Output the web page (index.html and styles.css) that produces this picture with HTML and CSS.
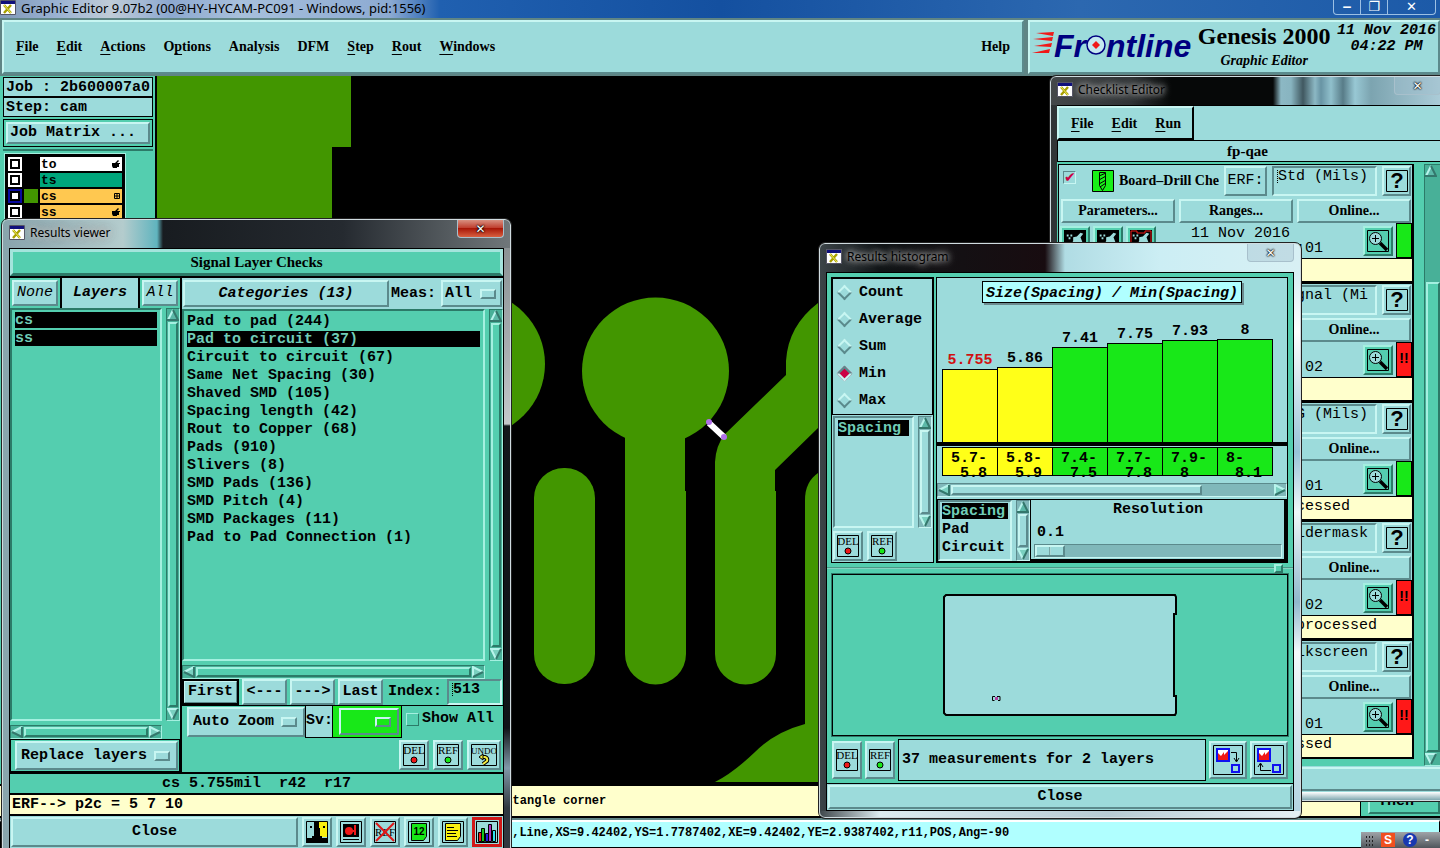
FILE: index.html
```html
<!DOCTYPE html>
<html lang="en">
<head>
  <meta charset="UTF-8">
  <meta name="viewport" content="width=device-width, initial-scale=1.0">
  <title>Graphic Editor 9.07b2</title>
  <link rel="stylesheet" href="styles.css">
</head>
<body>
  <!-- Shared icons -->
  <svg class="defs" width="0" height="0" aria-hidden="true">
    <symbol id="app" viewBox="0 0 16 15"><path fill="#fff" stroke="#556" d="M.5.5h15v14H.5z"/><path fill="#10107c" d="M1 1h14v3H1z"/><path stroke="#a8a000" stroke-width="2.4" d="M4 5l7 8M11 5l-7 8"/><path stroke="#f4ee60" d="M4 5l7 8"/></symbol>
    <symbol id="up" viewBox="0 0 12 12"><path fill="#5cb8a8" d="M6 0l6 12H0z"/><path fill="none" stroke="#b8f4ec" stroke-width="2" d="M6 1L1 11"/><path fill="none" stroke="#34776c" stroke-width="2" d="M0 11h11L6 1"/></symbol>
    <symbol id="down" viewBox="0 0 12 12"><path fill="#7ad0c0" d="M0 0h12L6 12z"/><path fill="none" stroke="#b8f4ec" stroke-width="2" d="M11 1H1l5 10"/><path stroke="#34776c" stroke-width="2" d="M11 1L6 11"/></symbol>
    <symbol id="left" viewBox="0 0 12 12"><path fill="#7ad0c0" d="M0 6L12 0v12z"/><path stroke="#b8f4ec" stroke-width="2" d="M1 6l10-5"/><path fill="none" stroke="#34776c" stroke-width="2" d="M1 6l10 5V1"/></symbol>
    <symbol id="right" viewBox="0 0 12 12"><path fill="#7ad0c0" d="M12 6L0 0v12z"/><path fill="none" stroke="#b8f4ec" stroke-width="2" d="M1 11V1l10 5"/><path stroke="#34776c" stroke-width="2" d="M11 6L1 11"/></symbol>
    <symbol id="del" viewBox="0 0 26 24"><path fill="none" stroke="#000" d="M2.500 1.500h21v21h-21z"/><text x="13" y="11" text-anchor="middle" class="tiny">DEL</text><circle cx="13" cy="17" r="3" fill="#f01818" stroke="#000"/></symbol>
    <symbol id="ref" viewBox="0 0 26 24"><path fill="none" stroke="#000" d="M2.500 1.500h21v21h-21z"/><text x="13" y="11" text-anchor="middle" class="tiny">REF</text><circle cx="13" cy="17" r="3" fill="#18e818" stroke="#000"/></symbol>
    <symbol id="zoomin" viewBox="0 0 24 24"><path fill="#54ceaf" stroke="#000" d="M1.500 1.500h21v21h-21z"/><circle cx="9.500" cy="9.500" r="6" fill="#9cdbdb" stroke="#000"/><path stroke="#000" d="M6 9.500h7M9.500 6v7"/><path stroke="#000" stroke-width="3.500" d="M14 14l7 7"/></symbol>
    <symbol id="help" viewBox="0 0 24 24"><path fill="none" stroke="#000" d="M1.500 1.500h21v21h-21z"/><text x="12" y="19" text-anchor="middle" class="qmark">?</text></symbol>
    <symbol id="hand" viewBox="0 0 8 8"><path d="M0 3h3l3-3 1 1-2 2h3v1H7v3H5v1H1L0 6z"/></symbol>
    <symbol id="run" viewBox="0 0 24 24"><path d="M0 0h24v24H0z"/><path fill="#9cdbdb" d="M3 5h2v2H3zM7 5h2v2H7zM5 8h2v2H5zM10 8l4-1 4-4 3 1-3 4 2 5-6 3-7 1 3-5zM4 18h3l4-2 2 4h-9z"/></symbol>
  </svg>

  <div class="main">
    <header class="main-title">
      <svg width="16" height="15"><use href="#app"/></svg>
      <span>Graphic Editor 9.07b2 (00@HY-HYCAM-PC091 - Windows, pid:1556)</span>
      <div class="win-buttons">
        <button aria-label="Minimize">&#8210;</button><button aria-label="Restore">&#10064;</button><button aria-label="Close">&#10005;</button>
      </div>
    </header>

    <div class="topbar">
      <nav class="menubar">
        <a href="#"><u>F</u>ile</a>
        <a href="#"><u>E</u>dit</a>
        <a href="#"><u>A</u>ctions</a>
        <a href="#">O<u>p</u>tions</a>
        <a href="#">Analysis</a>
        <a href="#">DFM</a>
        <a href="#"><u>S</u>tep</a>
        <a href="#"><u>R</u>out</a>
        <a href="#"><u>W</u>indows</a>
        <a href="#" class="help-link">Help</a>
      </nav>
      <div class="brand">
        <div class="logo">
          <svg width="22" height="26" viewBox="0 0 22 26"><path fill="#f01818" d="M4 3l18-1-1 4zM1 9l20-2-1 4zM2 16l18-3-1 4zM0 23l18-4-1 4z"/></svg>
          <span>Fr</span><svg width="20" height="26" viewBox="0 0 20 26"><circle cx="10" cy="15" r="9" fill="#c4e8f0" stroke="#000080" stroke-width="1.500"/><path fill="#f01818" d="M10 11l4 4-4 4-4-4z"/></svg><span>ntline</span>
        </div>
        <div class="product"><strong>Genesis 2000</strong><em>Graphic Editor</em></div>
        <div class="clock">11 Nov 2016<br>04:22 PM</div>
      </div>
    </div>

    <div class="work">
      <aside class="sidebar">
        <div class="job">Job : 2b600007a0</div>
        <div class="job">Step: cam</div>
        <div class="matrix"><button class="btn">Job Matrix ...</button></div>
        <div class="layer-area">
          <div class="layer-table">
            <div class="layer"><input type="checkbox" aria-label="to"><i></i><span class="white">to<svg width="8" height="8"><use href="#hand"/></svg></span></div>
            <div class="layer"><input type="checkbox" aria-label="ts"><i></i><span class="green">ts</span></div>
            <div class="layer"><input type="checkbox" aria-label="cs" checked><i class="on"></i><span class="orange">cs<svg width="6" height="6" viewBox="0 0 6 6"><path fill="none" stroke="#000" d="M.5.5h5v5h-5zM3 0v6M0 3h6"/></svg></span></div>
            <div class="layer"><input type="checkbox" aria-label="ss"><i></i><span class="orange">ss<svg width="8" height="8"><use href="#hand"/></svg></span></div>
          </div>
        </div>
      </aside>
      <div class="canvas">
        <svg width="100%" height="100%">
          <g transform="translate(-157 -76)" fill="#429600">
            <path d="M157 76h194v71h-19v80H157z"/>
            <circle cx="472" cy="364" r="73"/>
            <circle cx="655.500" cy="371" r="73.500"/>
            <path d="M625 430h60v61h1v163a30.500 30.500 0 0 1-61 0V491z"/>
            <rect x="534" y="468" width="61" height="216" rx="30"/>
            <path d="M715 462q1-17 10-28l61-59v-14q2-35 32-58v125l-43 42v21h1v163a30.500 30.500 0 0 1-61 0z"/>
            <path d="M805 520v-20q0-18 13-27v220q-13-8-13-30z"/>
            <path d="M715 782q18-9 40-30 20-20 50-28 10-2 18-2v60z"/>
            <path d="M805 520h13v205h-13z"/>
            <path stroke="#fff" stroke-width="6" d="M709 423l15 14"/>
            <g fill="#b070e8"><circle cx="709" cy="422" r="3"/><circle cx="724" cy="437" r="3"/></g>
          </g>
        </svg>
      </div>
    </div>
    <div class="prompt"><span>Rectangle corner</span><div class="then"><button class="btn teal">Then</button></div></div>
    <div class="coords">2,Line,XS=9.42402,YS=1.7787402,XE=9.42402,YE=2.9387402,r11,POS,Ang=-90</div>
  </div>

  <!-- Checklist Editor -->
  <section class="window checklist">
    <header class="title"><svg width="16" height="15"><use href="#app"/></svg><span>Checklist Editor</span><button class="x" aria-label="Close">&#10005;</button></header>
    <div class="content">
      <nav class="check-menu"><a href="#"><u>F</u>ile</a><a href="#"><u>E</u>dit</a><a href="#"><u>R</u>un</a></nav>
      <div class="check-name">fp-qae</div>
      <div class="check-body">
        <div class="cards">
          <div class="card">
            <div class="card-head"><input type="checkbox" checked aria-label="Board-Drill Checks">
              <svg class="drill" width="22" height="22" viewBox="0 0 22 22"><path fill="#18f018" stroke="#000" d="M.5.5h21v21H.5z"/><path fill="none" stroke="#000" d="M7.500 2.500h6v13l-3 5-3-5zM7 6l7-3M7 10l7-4M7 14l7-4M8 17l6-4"/></svg>
              <b>Board&ndash;Drill Checks</b><button class="btn">ERF:</button><input type="text" aria-label="ERF" value="Std (Mils)"><button class="btn icon"><svg width="24" height="24"><use href="#help"/></svg></button></div>
            <div class="card-buttons"><button class="btn">Parameters...</button><button class="btn">Ranges...</button><button class="btn">Online...</button></div>
            <div class="card-run"><button class="btn icon teal"><svg width="22" height="22"><use href="#run"/></svg></button><button class="btn icon teal"><svg width="22" height="22"><use href="#run"/></svg></button><button class="btn icon teal"><svg width="22" height="22"><use href="#run"/><path fill="none" stroke="#f01818" d="M1 1h6v2h8V1h6v20H1z"/></svg></button>
              <p>11 Nov 2016<br><span>00:00:01</span></p><button class="btn icon teal"><svg width="24" height="24"><use href="#zoomin"/></svg></button><div class="flag ok"></div></div>
            <div class="message"></div>
          </div>
          <div class="card">
            <div class="card-head"><input type="text" aria-label="ERF" value="Signal (Mi"><button class="btn icon"><svg width="24" height="24"><use href="#help"/></svg></button></div>
            <div class="card-buttons"><button class="btn">Online...</button></div>
            <div class="card-run"><p><br><span>00:00:02</span></p><button class="btn icon teal"><svg width="24" height="24"><use href="#zoomin"/></svg></button><div class="flag bad">!!</div></div>
            <div class="message"></div>
          </div>
          <div class="card">
            <div class="card-head"><input type="text" aria-label="ERF" value="P&amp;G (Mils)"><button class="btn icon"><svg width="24" height="24"><use href="#help"/></svg></button></div>
            <div class="card-buttons"><button class="btn">Online...</button></div>
            <div class="card-run"><p><br><span>00:00:01</span></p><button class="btn icon teal"><svg width="24" height="24"><use href="#zoomin"/></svg></button><div class="flag ok"></div></div>
            <div class="message">Layers cs,ss have been processed</div>
          </div>
          <div class="card">
            <div class="card-head"><input type="text" aria-label="ERF" value="Soldermask"><button class="btn icon"><svg width="24" height="24"><use href="#help"/></svg></button></div>
            <div class="card-buttons"><button class="btn">Online...</button></div>
            <div class="card-run"><p><br><span>00:00:02</span></p><button class="btn icon teal"><svg width="24" height="24"><use href="#zoomin"/></svg></button><div class="flag bad">!!</div></div>
            <div class="message">Layers to,ts,bs have been processed</div>
          </div>
          <div class="card">
            <div class="card-head"><input type="text" aria-label="ERF" value="Silkscreen"><button class="btn icon"><svg width="24" height="24"><use href="#help"/></svg></button></div>
            <div class="card-buttons"><button class="btn">Online...</button></div>
            <div class="card-run"><p><br><span>00:00:01</span></p><button class="btn icon teal"><svg width="24" height="24"><use href="#zoomin"/></svg></button><div class="flag bad">!!</div></div>
            <div class="message">Layers cs,ss are all processed</div>
          </div>
        </div>
        <div class="scroll v teal"><svg width="12" height="12"><use href="#up"/></svg><div class="gap"></div><div class="thumb"></div><svg width="12" height="12"><use href="#down"/></svg></div>
      </div>
      <div class="check-foot"><button class="btn" aria-label="Close"></button></div>
    </div>
  </section>

  <!-- Results viewer -->
  <section class="window viewer">
    <header class="title"><svg width="16" height="15"><use href="#app"/></svg><span>Results viewer</span><button class="x red" aria-label="Close">&#10005;</button></header>
    <div class="content">
      <h2 class="viewer-head">Signal Layer Checks</h2>
      <div class="columns">
        <div class="layers-col">
          <div class="layers-head"><div><button class="btn">None</button></div><h3>Layers</h3><div><button class="btn">All</button></div></div>
          <div class="list-wrap">
            <ul class="list"><li class="sel">cs</li><li class="sel">ss</li></ul>
            <div class="scroll v teal"><svg width="12" height="12"><use href="#up"/></svg><div class="thumb"></div><svg width="12" height="12"><use href="#down"/></svg></div>
            <div class="scroll h teal"><svg width="12" height="12"><use href="#left"/></svg><div class="thumb"></div><svg width="12" height="12"><use href="#right"/></svg></div>
          </div>
          <div class="replace"><div class="option"><select aria-label="Replace mode"><option>Replace layers</option></select></div></div>
        </div>
        <div class="cat-col">
          <div class="cat-head"><button class="btn">Categories (13)</button><label for="meas">Meas:</label><div class="option"><select id="meas"><option>All</option></select></div></div>
          <div class="list-wrap">
            <ul class="list">
              <li>Pad to pad (244)</li>
              <li class="sel">Pad to circuit (37)</li>
              <li>Circuit to circuit (67)</li>
              <li>Same Net Spacing (30)</li>
              <li>Shaved SMD (105)</li>
              <li>Spacing length (42)</li>
              <li>Rout to Copper (68)</li>
              <li>Pads (910)</li>
              <li>Slivers (8)</li>
              <li>SMD Pads (136)</li>
              <li>SMD Pitch (4)</li>
              <li>SMD Packages (11)</li>
              <li>Pad to Pad Connection (1)</li>
            </ul>
            <div class="scroll v teal"><svg width="12" height="12"><use href="#up"/></svg><div class="thumb"></div><svg width="12" height="12"><use href="#down"/></svg></div>
            <div class="scroll h teal"><svg width="12" height="12"><use href="#left"/></svg><div class="thumb"></div><svg width="12" height="12"><use href="#right"/></svg></div>
          </div>
          <div class="nav-row"><button class="btn default">First</button><button class="btn">&lt;---</button><button class="btn">---&gt;</button><button class="btn">Last</button><label for="index">Index:</label><input type="text" id="index" value="513"></div>
          <div class="zoom-row">
            <div class="option"><select aria-label="Zoom mode"><option>Auto Zoom</option></select></div>
            <label class="sv" for="sv">Sv:</label>
            <div class="sv-box"><div class="option"><select id="sv"><option></option></select></div></div>
            <label class="show-all"><input type="checkbox">Show All</label>
          </div>
          <div class="icon-row">
            <button class="btn icon"><svg width="26" height="24"><use href="#del"/></svg></button>
            <button class="btn icon"><svg width="26" height="24"><use href="#ref"/></svg></button>
            <button class="btn icon wide"><svg width="30" height="24" viewBox="0 0 30 24"><path fill="none" stroke="#000" d="M2.500 1.500h25v21h-25z"/><text x="15" y="11" text-anchor="middle" class="tiny narrow">UNDO</text><path fill="none" stroke="#000" stroke-width="4" d="M12 14h4q3 1 2 4l-4 3"/><path fill="none" stroke="#f8f040" stroke-width="2" d="M12 14h4q3 1 2 4l-4 3"/><path fill="#f8f040" stroke="#000" d="M10 14l4-3v6z"/></svg></button>
          </div>
        </div>
      </div>
      <div class="measure">cs 5.755mil&nbsp; r42&nbsp; r17</div>
      <div class="erf">ERF--&gt; p2c = 5 7 10</div>
      <div class="close-row">
        <button class="btn close">Close</button>
        <button class="btn icon" aria-label="Faces"><svg width="22" height="22" viewBox="0 0 22 22"><path fill="#9cdbdb" stroke="#000" d="M.5.5h21v21H.5z"/><path fill="#f8f010" d="M12 1h9v15h-9z"/><path d="M8 1h5v6h1v8h2v2h6v5H0v-5h6v-2h2zM4 5h2v2H4zM17 5h2v2h-2z"/></svg></button>
        <button class="btn icon" aria-label="Display"><svg width="22" height="22" viewBox="0 0 22 22"><path fill="#9cdbdb" stroke="#000" d="M.5.5h21v21H.5z"/><path d="M3 3h16v13H3z"/><circle cx="9" cy="10" r="4" fill="#f01818"/><path fill="#f01818" d="M14 4h2v10h-2zM10 9h5v2h-5z"/><path fill="none" stroke="#000" d="M3 18.500h16"/></svg></button>
        <button class="btn icon" aria-label="Clear references"><svg width="24" height="22" viewBox="0 0 24 22"><path fill="none" stroke="#000" d="M1.500.5h21v21h-21z"/><text x="12" y="15" text-anchor="middle" class="tiny">REF</text><path stroke="#e01818" stroke-width="2" d="M3 2l18 18M21 2L3 20"/></svg></button>
        <button class="btn icon" aria-label="Numbers"><svg width="22" height="22" viewBox="0 0 22 22"><path fill="none" stroke="#000" d="M.5.5h21v21H.5z"/><path fill="#18e818" stroke="#000" d="M3.500 2.500h15v13l-3 4h-12z"/><text x="11" y="14" text-anchor="middle" class="num">12</text></svg></button>
        <button class="btn icon" aria-label="Notes"><svg width="22" height="22" viewBox="0 0 22 22"><path fill="none" stroke="#000" d="M.5.5h21v21H.5z"/><path fill="#f8f010" stroke="#000" d="M3.500 2.500h15v13l-3 4h-12z"/><path stroke="#000" d="M5 6.500h7M5 9.500h11M5 12.500h9M5 15.500h10"/></svg></button>
        <button class="btn icon hist-btn" aria-label="Histogram"><svg width="22" height="22" viewBox="0 0 22 22"><path fill="#9cdbdb" stroke="#000" d="M.5.5h21v21H.5z"/><g stroke="#000"><path fill="#f01818" d="M2.500 11.500h3v9h-3z"/><path fill="#18c818" d="M5.500 7.500h3v13h-3z"/><path fill="#2020e0" d="M9.500 12.500h3v8h-3z"/><path fill="#b030c0" d="M12.500 3.500h3v17h-3z"/><path fill="#30e0f0" d="M16.500 9.500h3v11h-3z"/></g></svg></button>
      </div>
    </div>
  </section>

  <!-- Results histogram -->
  <section class="window histogram">
    <header class="title"><svg width="16" height="15"><use href="#app"/></svg><span>Results histogram</span><button class="x" aria-label="Close">&#10005;</button></header>
    <div class="content">
      <div class="hist-top">
        <div class="hist-side">
          <div class="radios">
            <label><input type="radio" name="stat">Count</label>
            <label><input type="radio" name="stat">Average</label>
            <label><input type="radio" name="stat">Sum</label>
            <label><input type="radio" name="stat" checked>Min</label>
            <label><input type="radio" name="stat">Max</label>
          </div>
          <div class="list-wrap pale">
            <ul class="list"><li class="sel">Spacing</li></ul>
            <div class="scroll v"><svg width="12" height="12"><use href="#up"/></svg><div class="thumb"></div><svg width="12" height="12"><use href="#down"/></svg></div>
          </div>
          <div class="side-buttons">
            <button class="btn icon"><svg width="26" height="24"><use href="#del"/></svg></button>
            <button class="btn icon"><svg width="26" height="24"><use href="#ref"/></svg></button>
          </div>
        </div>
        <div class="hist-main">
          <div class="chart">
            <h3>Size(Spacing) / Min(Spacing)</h3>
            <div class="bars">
              <div class="bar low worst"><span>5.755</span><i style="height: 73px"></i></div>
              <div class="bar low"><span>5.86</span><i style="height: 75px"></i></div>
              <div class="bar"><span>7.41</span><i style="height: 95px"></i></div>
              <div class="bar"><span>7.75</span><i style="height: 99px"></i></div>
              <div class="bar"><span>7.93</span><i style="height: 102px"></i></div>
              <div class="bar"><span>8</span><i style="height: 103px"></i></div>
            </div>
            <div class="ranges">
              <pre class="low">5.7-
 5.8</pre><pre class="low">5.8-
 5.9</pre><pre>7.4-
 7.5</pre><pre>7.7-
 7.8</pre><pre>7.9-
 8</pre><pre>8-
 8.1</pre>
            </div>
          </div>
          <div class="scroll h chart-scroll"><svg width="12" height="12"><use href="#left"/></svg><div class="thumb"></div><div class="gap"></div><svg width="12" height="12"><use href="#right"/></svg></div>
          <div class="hist-bottom">
            <div class="list-wrap pale">
              <ul class="list"><li class="sel">Spacing</li><li>Pad</li><li>Circuit</li></ul>
              <div class="scroll v"><svg width="12" height="12"><use href="#up"/></svg><div class="thumb"></div><svg width="12" height="12"><use href="#down"/></svg></div>
            </div>
            <div class="resolution"><label for="res">Resolution</label><output>0.1</output><input type="range" id="res" min="0" max="10" step="0.1" value="0"></div>
          </div>
        </div>
      </div>
      <div class="sash"><i></i></div>
      <div class="map">
        <svg width="234" height="122" viewBox="0 0 234 122"><path fill="#9cdbdb" stroke="#000" stroke-width="2" d="M3 1h229l1 2v17h-2v82h2v17l-1 2H3l-2-2V3z"/><path fill="none" stroke="#000" d="M52 102.500h-2.500v4h2M54 102.500h3v4h-2"/><path fill="#b040a0" d="M52 103h3v3h-3z"/></svg>
      </div>
      <div class="hist-foot">
        <button class="btn icon"><svg width="26" height="24"><use href="#del"/></svg></button>
        <button class="btn icon"><svg width="26" height="24"><use href="#ref"/></svg></button>
        <div class="summary">37 measurements for 2 layers</div>
        <button class="btn icon big" aria-label="Next"><svg width="32" height="30" viewBox="0 0 32 30"><path fill="none" stroke="#000" d="M1.500.5h29v29h-29z"/><path fill="#fff" stroke="#1010f0" stroke-width="2" d="M5 4h12v12H5z"/><path fill="#f01818" d="M6 15V8l3 3 3-4v3l4-4v9z"/><path fill="none" stroke="#1010f0" stroke-width="2" d="M20 20h7v7h-7z"/><path fill="none" stroke="#000" d="M19 7.500h5.500V16M22 13l2.500 4 2.500-4"/></svg></button>
        <button class="btn icon big" aria-label="Previous"><svg width="32" height="30" viewBox="0 0 32 30"><path fill="none" stroke="#000" d="M1.500.5h29v29h-29z"/><path fill="#fff" stroke="#1010f0" stroke-width="2" d="M5 4h12v12H5z"/><path fill="#f01818" d="M6 15V8l3 3 3-4v3l4-4v9z"/><path fill="none" stroke="#1010f0" stroke-width="2" d="M20 20h7v7h-7z"/><path fill="none" stroke="#000" d="M18 25.500H7.500V19M5 22l2.500-4 2.500 4"/></svg></button>
      </div>
      <div class="hist-close"><button class="btn">Close</button></div>
    </div>
  </section>

  <div class="tray"><span class="grip"></span><b class="sogou">S</b><b class="ask">?</b><b>-</b></div>
</body>
</html>
```
FILE: styles.css
```css
* { box-sizing: border-box; }
:root { --pale: #9cdbdb; --teal: #54ceaf; --hi: #c8f6f2; --sh: #5b8a8c; --thi: #a4f0e0; --tsh: #2c7a68; --cream: #ffffcc; --mono: "Liberation Mono", monospace; --serif: "Liberation Serif", serif; }
html, body { height: 100%; }
body { margin: 0; overflow: hidden; position: relative; background: #000; color: #000; font: bold 15px/18px var(--mono); }
h2, h3, p, ul, pre { margin: 0; padding: 0; font: inherit; }
ul { list-style: none; }
svg { display: block; flex: none; }
a { color: inherit; text-decoration: none; }
u { text-underline-offset: 3px; }
button, input, select { font: inherit; color: inherit; margin: 0; padding: 0; border-radius: 0; }
.defs { display: none; }
.tiny { font: 11px var(--serif); }
.narrow { font-size: 9px; }
.num { font: bold 10px "Liberation Sans", sans-serif; }
.qmark { font: bold 22px "Liberation Sans", sans-serif; }

/* Motif style widgets */
.btn { background: var(--pale); border: 2px solid; border-color: var(--hi) var(--sh) var(--sh) var(--hi); white-space: nowrap; }
.btn.teal { background: var(--teal); border-color: var(--thi) var(--tsh) var(--tsh) var(--thi); }
.btn.icon { display: flex; align-items: center; justify-content: center; flex: none; width: 30px; height: 30px; }
.btn.icon.wide { width: 34px; }
input[type="text"] { background: repeating-linear-gradient(#000 0, #000 1px, transparent 1px, transparent 2px) 3px 2px / 1px 14px no-repeat; border: 2px solid; border-color: var(--sh) var(--hi) var(--hi) var(--sh); min-width: 0; }
.option { display: flex; align-items: center; background: var(--pale); border: 2px solid; border-color: var(--hi) var(--sh) var(--sh) var(--hi); padding: 0 6px 0 4px; }
.option select { appearance: none; flex: 1; min-width: 0; border: 0; background: transparent; }
.option::after { content: ""; width: 12px; height: 6px; border: 2px solid; border-color: var(--hi) var(--sh) var(--sh) var(--hi); }
.scroll { display: flex; background: #80b8ba; border: 1px solid; border-color: var(--sh) var(--hi) var(--hi) var(--sh); }
.scroll.teal { background: #48b098; border-color: var(--tsh) var(--thi) var(--thi) var(--tsh); }
.scroll.v { flex-direction: column; width: 14px; }
.scroll.h { height: 14px; }
.thumb { flex: 1; margin: 1px; background: var(--pale); border: 2px solid; border-color: var(--hi) var(--sh) var(--sh) var(--hi); }
.teal .thumb { background: var(--teal); border-color: var(--thi) var(--tsh) var(--tsh) var(--thi); }
.list-wrap { display: grid; grid-template: 1fr / 1fr 14px; gap: 4px; min-height: 0; }
.list { border: 2px solid; border-color: var(--tsh) var(--thi) var(--thi) var(--tsh); padding: 2px 3px; overflow: hidden; }
.pale .list { border-color: var(--sh) var(--hi) var(--hi) var(--sh); }
.list li { height: 16px; line-height: 18px; margin-bottom: 2px; white-space: nowrap; }
.list .sel { background: #000; color: #70cdb8; }

/* Main window */
.main { height: 100%; display: flex; flex-direction: column; background: #5f8585; }
.main-title { display: flex; gap: 5px; height: 18px; flex: none; overflow: hidden; background: linear-gradient(90deg, #8098b8 0, #9cb4d4 60px, #c0ccd8 110px, #8ca8d0 170px, #a8c0dc 240px, #8caad2 390px, #2060b0 440px, #1450a0 50%, #2c68b0 75%, #1c5aa8); font: 13px/16px "Noto Sans", sans-serif; }
.win-buttons { display: flex; margin-left: auto; margin-right: 4px; height: 15px; border: 1px solid #9cc0e4; border-top: 0; border-radius: 0 0 4px 4px; }
.win-buttons button { width: 27px; border: 0; border-right: 1px solid #9cc0e4; background: transparent; color: #fff; font: bold 13px/10px "DejaVu Sans", sans-serif; }
.win-buttons button:last-child { width: 47px; border: 0; }
.topbar { display: flex; gap: 4px; padding: 2px 0 2px 2px; height: 58px; flex: none; }
.menubar, .brand { background: var(--pale); border: 2px solid; border-color: var(--hi) var(--sh) var(--sh) var(--hi); }
.menubar { flex: 1; display: flex; align-items: center; gap: 18px; padding: 0 12px; font: bold 14px/18px var(--serif); }
.help-link { margin-left: auto; }
.brand { width: 412px; display: flex; padding-left: 2px; }
.logo { display: flex; align-items: flex-start; padding-top: 8px; color: #000080; font: italic bold 32px/32px "Liberation Sans", sans-serif; }
.product { flex: 1; text-align: center; }
.product strong { display: block; font: bold 24px/29px var(--serif); white-space: nowrap; }
.product em { display: block; font: italic bold 14px/20px var(--serif); }
.clock { font: italic bold 15px/16px var(--mono); text-align: center; padding: 1px 2px 0 0; white-space: nowrap; }
.work { flex: 1; display: flex; min-height: 0; }
.sidebar { width: 157px; background: var(--teal); border-right: 2px solid #000; padding: 1px 2px 0 3px; display: flex; flex-direction: column; }
.job { background: var(--pale); border: 1px solid #000; height: 20px; padding-left: 2px; line-height: 20px; white-space: nowrap; }
.matrix { border: 1px solid #000; margin: 2px 0; padding: 2px; display: flex; }
.matrix .btn { flex: 1; height: 22px; text-align: left; padding-left: 2px; line-height: 18px; }
.layer-area { flex: 1; padding: 3px 0 0 2px; border-top: 2px solid var(--tsh); }
.layer-table { width: 120px; border: 1px solid #000; background: #000; padding: 1px; outline: 1px solid var(--thi); }
.layer { display: flex; gap: 2px; height: 16px; padding: 1px; font-size: 13px; line-height: 15px; }
.layer input { appearance: none; width: 14px; height: 14px; background: #fff; border: 2px solid #fff; outline: 2px solid #000; outline-offset: -4px; }
.layer input:checked { border-color: #0a0aa0; }
.layer i { width: 14px; }
.layer .on { background: #429600; }
.layer span { flex: 1; display: flex; align-items: center; justify-content: space-between; padding: 0 2px 0 1px; }
.layer .white { background: #fff; }
.layer .green { background: #00a67c; }
.layer .orange { background: #ffc850; }
.canvas { flex: 1; background: #000; min-width: 0; }
.prompt { height: 34px; flex: none; border: solid #000; border-width: 2px 0; background: var(--cream); display: flex; align-items: center; justify-content: space-between; padding-left: 491px; font-size: 12px; }
.then { align-self: stretch; width: 80px; background: var(--teal); border-left: 1px solid #000; padding: 4px 0 2px 7px; display: flex; }
.then .btn { flex: 1; font-size: 15px; padding-right: 16px; }
.coords { margin-top: 2px; height: 28px; flex: none; background: #b0ffff; border: 1px solid #000; border-top: 2px solid #fff; padding-left: 504px; font-size: 12px; line-height: 23px; white-space: nowrap; }

/* Floating windows */
.window { position: absolute; border: 1px solid #d0dce0; border-radius: 6px; padding: 0 6px; outline: 1px solid #222; display: flex; flex-direction: column; }
.title { display: flex; gap: 5px; align-items: flex-start; flex: none; font: 12px/16px "Noto Sans", sans-serif; }
.title > svg, .title span { margin-top: 5px; }
.title span { text-shadow: 0 0 5px #ccc, 0 0 8px #aaa, 0 0 12px #999; }
.title .x { margin-left: auto; width: 47px; height: 18px; border: 1px solid #a8c0cc; border-top: 0; border-radius: 0 0 4px 4px; background: rgba(160, 190, 205, .4); color: #fff; font: bold 12px/14px "DejaVu Sans", sans-serif; text-shadow: 0 0 1px #000, 0 0 2px #000, 0 0 2px #000; }
.title .x.red { background: linear-gradient(#d89080, #c04030 45%, #a81808 50%, #d86040); }
.content { display: flex; flex-direction: column; }

.viewer { left: 2px; top: 219px; width: 509px; bottom: -6px; background: linear-gradient(#8c9294, #a8adb0 100px, #c4c8ca 176px, #14181c 178px, #101418 480px, #8098a8 520px, #303840 560px) 100% 28px / 7px 100% no-repeat, linear-gradient(90deg, #88a4ac 0, #b4cccd 120px, #60b4be 154px, #181c20 160px, #252a30 340px, #70777a 100%); }
.viewer .title { height: 28px; }
.viewer .content { flex: 1; background: #000; gap: 2px; padding: 1px; }
.viewer-head { height: 27px; background: var(--teal); border: 3px solid #a4e4dc; border-bottom-color: var(--tsh); text-align: center; font: bold 15px/21px var(--serif); }
.columns { display: grid; grid-template-columns: 170px 1fr; gap: 2px; height: 494px; }
.layers-col, .cat-col { background: var(--teal); display: flex; flex-direction: column; min-width: 0; }
.layers-head { display: grid; grid-template-columns: 50px 1fr 40px; gap: 2px; background: #000; height: 30px; padding-bottom: 2px; font-style: italic; text-align: center; }
.layers-head div { background: var(--teal); padding: 2px; display: flex; }
.layers-head .btn { flex: 1; font-weight: normal; font-style: italic; }
.layers-head h3 { background: var(--pale); line-height: 30px; }
.layers-col .list-wrap { flex: 1; grid-template-rows: 1fr 14px; }
.cat-col .list-wrap { height: 370px; grid-template-rows: 1fr 14px; }
.replace { height: 33px; border: 1px solid #000; padding: 1px 1px 1px 4px; display: flex; }
.replace .option { flex: 1; }
.cat-head { display: flex; height: 31px; background: var(--pale); padding: 2px 1px; }
.cat-head .btn { width: 206px; font-style: italic; }
.cat-head label { padding: 5px 5px 0 2px; }
.cat-head .option { flex: 1; padding: 0 4px 0 2px; }
.nav-row { display: flex; gap: 3px; height: 26px; padding-right: 1px; }
.nav-row .btn { width: 45px; padding: 0; }
.nav-row .default { width: 57px; outline: 2px solid #000; outline-offset: -2px; border-width: 3px; }
.nav-row label { padding: 4px 2px 0; }
.nav-row input { flex: 1; padding: 0 0 4px 4px; }
.zoom-row { display: flex; height: 33px; border-top: 1px solid #000; }
.zoom-row > .option { width: 118px; margin: 1px 0 1px 5px; }
.sv { background: var(--pale); border: 1px solid #000; border-top: 0; width: 28px; line-height: 30px; }
.sv-box { width: 69px; background: #18e818; border: 1px solid #000; border-width: 0 1px 1px 0; padding: 2px 2px 2px 6px; display: flex; }
.sv-box .option { flex: 1; background: #18e818; }
.show-all { display: flex; align-items: center; gap: 3px; padding: 0 0 6px 4px; }
.show-all input { appearance: none; width: 13px; height: 13px; border: 1px solid; border-color: var(--thi) var(--tsh) var(--tsh) var(--thi); }
.icon-row { flex: 1; display: flex; gap: 4px; justify-content: flex-end; align-items: center; padding-right: 2px; }
.measure { background: var(--teal); height: 19px; line-height: 20px; text-align: center; }
.erf { background: var(--cream); height: 19px; line-height: 20px; padding-left: 2px; }
.close-row { flex: 1; display: flex; gap: 4px; background: var(--pale); padding: 1px; align-items: flex-start; }
.close-row .close { flex: 1; height: 30px; }
.hist-btn { border: 3px solid #d01818; }

.histogram { left: 819px; top: 243px; width: 482px; background: linear-gradient(90deg, #40484c, #dcecf0 60px, #b8ccd4 60%, #e4f0f4) 0 100% / 100% 6px no-repeat, linear-gradient(#d8eef4, #fff 60px, #98c4d8 180px, #f0f8fa 240px, #90b8cc 330px, #f4fafc 380px, #a8ccdc) 100% 28px / 7px 100% no-repeat, linear-gradient(90deg, #3c4448 0, #101416 60px, #180c10 225px, #b0dce4 245px, #cceef4 340px, #d8f0f4); padding-bottom: 6px; }
.histogram .title { height: 28px; }
.histogram .content { background: var(--teal); border: 1px solid #000; }
.hist-top { display: grid; grid-template-columns: 103px 1fr; gap: 2px; height: 286px; margin: 4px 5px 0 4px; }
.hist-side { background: var(--pale); border: 1px solid #000; display: flex; flex-direction: column; }
.radios { height: 137px; border: 1px solid #000; padding: 0 4px; line-height: 16px; }
.radios label { display: flex; align-items: center; gap: 7px; height: 27px; }
.radios input { appearance: none; width: 11px; height: 11px; margin: 0 2px; transform: rotate(45deg); background: var(--pale); border: 2px solid; border-color: var(--hi) var(--sh) var(--sh) var(--hi); }
.radios input:checked { background: #cc0044; border-color: var(--sh) var(--hi) var(--hi) var(--sh); }
.hist-side .list-wrap { flex: 1; padding: 1px; }
.side-buttons { display: flex; gap: 4px; height: 33px; padding: 2px 1px; }
.hist-main { display: flex; flex-direction: column; min-width: 0; border: 1px solid #000; background: var(--pale); }
.chart { height: 205px; display: flex; flex-direction: column; }
.chart h3 { align-self: center; margin-top: 3px; height: 22px; padding: 0 3px; background: #b0ffff; border: 1px solid #000; box-shadow: 2px 2px 0 #6c8c90; font-style: italic; line-height: 24px; }
.bars { flex: 1; display: flex; align-items: flex-end; padding-left: 5px; border-bottom: 4px solid #000; }
.bar { width: 56px; margin-right: -1px; text-align: center; line-height: 16px; }
.bar i { display: block; background: #18e818; border: 1px solid #000; border-bottom: 0; }
.bar.low i, .ranges .low { background: #ffff18; }
.bar.worst { color: #d01010; }
.ranges { display: flex; padding: 1px 0 7px 5px; }
.ranges pre { width: 56px; height: 29px; margin-right: -1px; background: #18e818; border: 1px solid #000; padding: 3px 0 0 8px; line-height: 15px; }
.chart-scroll .thumb { flex: 7; }
.chart-scroll .gap { flex: 2; }
.hist-bottom { flex: 1; display: grid; grid-template-columns: 92px 1fr; margin-top: 2px; border: 1px solid #000; min-height: 0; }
.hist-bottom .list { padding: 1px 2px; }
.resolution { border: 1px solid #000; border-width: 0 2px 2px 1px; display: grid; grid-template-rows: 21px 23px 1fr; padding: 0 2px 0 3px; }
.resolution label { text-align: center; line-height: 20px; }
.resolution output { padding: 3px 0 0 3px; }
.resolution input { appearance: none; width: 100%; height: 14px; background: #80b8ba; border: 1px solid; border-color: var(--sh) var(--hi) var(--hi) var(--sh); }
.resolution input::-webkit-slider-thumb { appearance: none; width: 30px; height: 12px; border: 2px solid; border-color: var(--hi) var(--sh) var(--sh) var(--hi); background: linear-gradient(90deg, var(--pale) 12px, var(--sh) 12px, var(--hi) 14px, var(--pale) 14px); }
.sash { height: 11px; display: flex; align-items: center; justify-content: flex-end; padding-right: 10px; background: linear-gradient(transparent 4px, var(--tsh) 4px, var(--thi) 6px, transparent 6px); }
.sash i { width: 9px; height: 9px; background: var(--teal); border: 2px solid; border-color: var(--thi) var(--tsh) var(--tsh) var(--thi); }
.map { height: 162px; margin: 0 5px; border: 1px solid #000; outline: 1px solid var(--tsh); display: flex; justify-content: center; align-items: center; }
.hist-foot { display: flex; gap: 3px; padding: 1px 5px; height: 47px; align-items: center; }
.hist-foot .btn { height: 38px; }
.hist-foot .big { width: 38px; }
.summary { flex: 1; height: 42px; border: 1px solid #000; background: var(--pale); padding-left: 3px; line-height: 40px; }
.hist-close { border-top: 1px solid #000; background: var(--pale); padding: 1px; display: flex; }
.hist-close .btn { flex: 1; height: 24px; }

.checklist { left: 1050px; top: 76px; width: 398px; height: 725px; background: linear-gradient(90deg, #44484a 0, #303436 80px, #060808 120px, #060808 222px, #8cb8c4 230px, #88b4c0 240px, #405860 252px, #8cb8c4 264px, #6894a4 270px, #90c0cc 280px, #587c88 292px, #98c8d4 304px, #7ca4b0 320px, #b0d0dc) 0 0 / 100% 28px no-repeat, linear-gradient(#fff, #80a8b0) 0 100% / 100% 8px no-repeat, #303436; }
.checklist .title { height: 28px; }
.checklist .content { flex: 1; background: var(--pale); border-top: 1px solid #000; margin-right: -7px; margin-bottom: 8px; min-height: 0; }
.check-menu { display: flex; gap: 18px; width: 137px; height: 34px; padding: 6px 12px; border: 2px solid; border-color: var(--hi) #000 #000 var(--hi); font: bold 14px/19px var(--serif); }
.check-name { height: 22px; border: 1px solid #000; text-align: center; padding-right: 10px; font: bold 15px/20px var(--serif); }
.check-body { flex: 1; min-height: 0; display: flex; gap: 10px; background: var(--teal); padding: 2px 6px 0 1px; }
.cards { width: 356px; height: 595px; overflow: hidden; border: 1px solid #000; border-right-width: 2px; background: var(--pale); }
.card { height: 119px; display: flex; flex-direction: column; border-bottom: 3px solid #000; }
.card-head { display: flex; justify-content: flex-end; height: 32px; gap: 5px; padding-right: 1px; align-items: center; margin-bottom: 2px; }
.card-head input[type="checkbox"] { appearance: none; width: 13px; height: 13px; border: 1px solid; border-color: var(--sh) var(--hi) var(--hi) var(--sh); margin: 0 auto 8px 4px; }
.card-head input[type="checkbox"]::after { content: "\2714"; display: block; color: #cc0044; font: 14px/10px "DejaVu Sans", sans-serif; }
.card-head b { width: 100px; overflow: hidden; white-space: nowrap; font: bold 14px/20px var(--serif); }
.card-head > .btn { height: 30px; }
.card-head > .btn.icon { width: 29px; }
.card-head > .btn:not(.icon) { width: 43px; font-weight: normal; }
.card-head input[type="text"] { width: 105px; height: 30px; padding: 0 0 9px 4px; font-weight: normal; }
.card-buttons { display: flex; justify-content: flex-end; gap: 4px; padding-right: 1px; }
.card-buttons .btn { width: 114px; height: 24px; font: bold 14px/18px var(--serif); }
.card-run { display: flex; justify-content: flex-end; align-items: center; gap: 3px; height: 35px; }
.card-run p { width: 201px; font-weight: normal; line-height: 15px; padding-left: 32px; }
.card-run p span { padding-left: 60px; }
.flag { width: 16px; align-self: stretch; border: 1px solid #000; text-align: center; font: bold 14px/30px "Liberation Sans", sans-serif; }
.ok { background: #18e818; }
.bad { background: #ff1818; }
.message { flex: 1; background: var(--cream); border-top: 1px solid #000; padding-left: 3px; line-height: 20px; font-weight: normal; white-space: nowrap; }
.check-body .scroll { width: 18px; }
.check-body .gap { flex: 2; }
.check-body .thumb { flex: 9; }
.check-foot { padding: 1px 0; display: flex; background: var(--pale); }
.check-foot .btn { flex: 1; height: 24px; }

.tray { position: absolute; right: 0; bottom: 0; width: 79px; height: 16px; display: flex; gap: 8px; align-items: center; padding-left: 4px; background: linear-gradient(#a0a4a8, #50565c); color: #fff; font: bold 12px/14px "Liberation Sans", sans-serif; }
.grip { width: 8px; height: 11px; background: radial-gradient(#222 1px, transparent 1px) 0 0 / 3px 4px; }
.sogou { width: 14px; background: #f05020; text-align: center; }
.ask { width: 14px; border-radius: 7px; background: #1838b0; text-align: center; }
```
